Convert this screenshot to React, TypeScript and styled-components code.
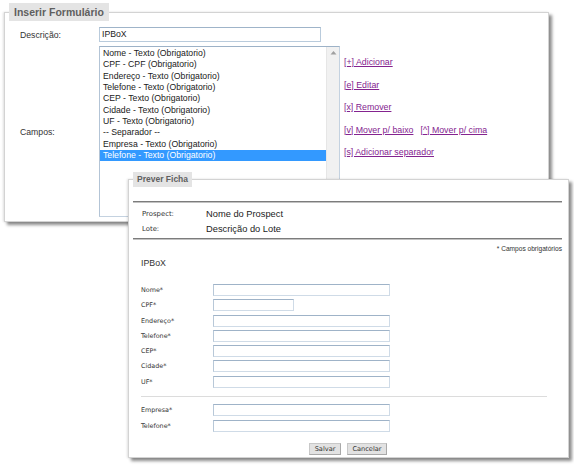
import styled, { createGlobalStyle } from 'styled-components';

const GlobalStyle = createGlobalStyle`
  html, body {
    margin: 0;
    padding: 0;
    background: #fff;
  }
  body {
    font-family: "Liberation Sans", Arial, sans-serif;
    color: #222;
  }
`;

const campos = [
  'Nome - Texto (Obrigatorio)',
  'CPF - CPF (Obrigatorio)',
  'Endereço - Texto (Obrigatorio)',
  'Telefone - Texto (Obrigatorio)',
  'CEP - Texto (Obrigatorio)',
  'Cidade - Texto (Obrigatorio)',
  'UF - Texto (Obrigatorio)',
  '-- Separador --',
  'Empresa - Texto (Obrigatorio)',
  'Telefone - Texto (Obrigatorio)',
];

const fichaTop = [
  { label: 'Nome*', short: false },
  { label: 'CPF*', short: true },
  { label: 'Endereço*', short: false },
  { label: 'Telefone*', short: false },
  { label: 'CEP*', short: false },
  { label: 'Cidade*', short: false },
  { label: 'UF*', short: false },
];

const fichaBottom = ['Empresa*', 'Telefone*'];

export default function App() {
  return (
    <>
      <GlobalStyle />
      <Desktop>
        <Window $left={4} $top={3} $width={545} $height={219}>
          <Legend $size={10.5} $height={18} $pad={5}>
            Inserir Formulário
          </Legend>
          <FormBody>
            <FieldLabel>Descrição:</FieldLabel>
            <TextBox>IPBoX</TextBox>
            <span />
            <FieldLabel>Campos:</FieldLabel>
            <ListBox>
              <ListItems>
                {campos.map((c, i) => (
                  <ListItem key={i} $selected={i === campos.length - 1}>
                    {c}
                  </ListItem>
                ))}
              </ListItems>
              <ScrollBar>
                <svg width="7" height="5" viewBox="0 0 7 5">
                  <path d="M0.5 4.5 L3.5 1 L6.5 4.5 Z" fill="#a0a0a0" />
                </svg>
              </ScrollBar>
            </ListBox>
            <Actions>
              <ActionRow>
                <ActionLink href="#">[+] Adicionar</ActionLink>
              </ActionRow>
              <ActionRow>
                <ActionLink href="#">[e] Editar</ActionLink>
              </ActionRow>
              <ActionRow>
                <ActionLink href="#">[x] Remover</ActionLink>
              </ActionRow>
              <ActionRow>
                <ActionLink href="#">[v] Mover p/ baixo</ActionLink>
                <ActionLink href="#">[^] Mover p/ cima</ActionLink>
              </ActionRow>
              <ActionRow>
                <ActionLink href="#">[s] Adicionar separador</ActionLink>
              </ActionRow>
            </Actions>
          </FormBody>
        </Window>

        <Window $left={128} $top={172} $width={441} $height={286}>
          <Legend $size={8.5} $height={15} $pad={4}>
            Prever Ficha
          </Legend>
          <FichaBody>
            <Rule />
            <InfoTable>
              <InfoLabel>Prospect:</InfoLabel>
              <InfoValue>Nome do Prospect</InfoValue>
              <InfoLabel>Lote:</InfoLabel>
              <InfoValue>Descrição do Lote</InfoValue>
            </InfoTable>
            <Rule />
            <RequiredNote>* Campos obrigatórios</RequiredNote>
            <FichaTitle>IPBoX</FichaTitle>
            <FichaGrid>
              {fichaTop.map((f) => (
                <FichaRow key={f.label}>
                  <FichaLabel>{f.label}</FichaLabel>
                  <FichaInput $short={f.short} />
                </FichaRow>
              ))}
              <FichaSeparator />
              {fichaBottom.map((f) => (
                <FichaRow key={f}>
                  <FichaLabel>{f}</FichaLabel>
                  <FichaInput $short={false} />
                </FichaRow>
              ))}
            </FichaGrid>
            <ButtonBar>
              <Button>Salvar</Button>
              <Button>Cancelar</Button>
            </ButtonBar>
          </FichaBody>
        </Window>
      </Desktop>
    </>
  );
}

const Desktop = styled.div`
  position: relative;
  width: 574px;
  height: 465px;
  overflow: hidden;
  background: #fff;
`;

interface WindowProps {
  $left: number;
  $top: number;
  $width: number;
  $height: number;
}

const Window = styled.fieldset<WindowProps>`
  position: absolute;
  left: ${({ $left }) => $left}px;
  top: ${({ $top }) => $top}px;
  width: ${({ $width }) => $width}px;
  height: ${({ $height }) => $height}px;
  box-sizing: border-box;
  margin: 0;
  padding: 0;
  min-width: 0;
  border: 1px solid #d3d3d3;
  background: #fff;
  box-shadow: 3px 3px 3px rgba(0, 0, 0, 0.45), -1px 0 2px rgba(0, 0, 0, 0.12);
`;

const Legend = styled.legend<{ $size: number; $height: number; $pad: number }>`
  margin-left: 4px;
  padding: 0 ${({ $pad }) => $pad}px;
  box-sizing: border-box;
  height: ${({ $height }) => $height}px;
  line-height: ${({ $height }) => $height}px;
  background: #e4e4e4;
  color: #5f5f5f;
  font-weight: bold;
  font-size: ${({ $size }) => $size}px;
`;

const FormBody = styled.div`
  display: grid;
  grid-template-columns: 79px auto 1fr;
  row-gap: 4px;
  padding: 6px 0 0 15px;
  font-size: 8.7px;
`;

const FieldLabel = styled.div`
  align-self: center;
  color: #333;
`;

const TextBox = styled.div`
  box-sizing: border-box;
  width: 222px;
  height: 15px;
  line-height: 13px;
  padding-left: 2px;
  border: 1px solid #b9cbdc;
  border-top-color: #9fb4c9;
  color: #222;
`;

const ListBox = styled.div`
  display: flex;
  box-sizing: border-box;
  width: 241px;
  height: 171px;
  border: 1px solid #c4d2e0;
  border-top-color: #9db2c7;
  border-left-color: #b3c4d6;
`;

const ListItems = styled.div`
  flex: 1;
  padding-top: 1px;
`;

const ListItem = styled.div<{ $selected: boolean }>`
  height: 11.33px;
  line-height: 11.33px;
  padding-left: 3px;
  white-space: nowrap;
  color: ${({ $selected }) => ($selected ? '#fff' : '#1a1a1a')};
  background: ${({ $selected }) => ($selected ? '#3399ff' : 'transparent')};
`;

const ScrollBar = styled.div`
  display: flex;
  justify-content: center;
  width: 13px;
  padding-top: 3px;
  background: #f1f1f1;
  border-left: 1px solid #e6e6e6;
  box-sizing: border-box;
`;

const Actions = styled.div`
  display: flex;
  flex-direction: column;
  gap: 11.5px;
  padding: 11px 0 0 4px;
`;

const ActionRow = styled.div`
  display: flex;
  gap: 7px;
  height: 11px;
  line-height: 11px;
`;

const ActionLink = styled.a`
  font-size: 8.8px;
  color: #84238f;
  text-decoration: underline;
  white-space: nowrap;
`;

const FichaBody = styled.div`
  padding: 14px 6px 0 4px;
`;

const Rule = styled.div`
  border-top: 1px solid #7c7c7c;
  border-bottom: 1px solid #c2c2c2;
`;

const InfoTable = styled.div`
  display: grid;
  grid-template-columns: 64px 1fr;
  grid-auto-rows: 15px;
  align-items: center;
  padding: 3px 0 2px 9px;
`;

const InfoLabel = styled.div`
  font-family: "DejaVu Sans", Verdana, sans-serif;
  font-size: 6.9px;
  color: #333;
`;

const InfoValue = styled.div`
  font-size: 9.3px;
  color: #222;
`;

const RequiredNote = styled.div`
  margin-top: 5px;
  text-align: right;
  font-size: 6.6px;
  line-height: 8px;
  color: #333;
`;

const FichaTitle = styled.div`
  margin-top: 5px;
  padding-left: 8px;
  font-size: 8.8px;
  line-height: 11px;
  color: #333;
`;

const FichaGrid = styled.div`
  display: flex;
  flex-direction: column;
  gap: 3.3px;
  margin-top: 15px;
  padding-left: 8px;
`;

const FichaRow = styled.div`
  display: grid;
  grid-template-columns: 72px 1fr;
  align-items: center;
  height: 12px;
`;

const FichaLabel = styled.div`
  font-family: "DejaVu Sans", Verdana, sans-serif;
  font-size: 6.4px;
  color: #333;
`;

const FichaInput = styled.div<{ $short: boolean }>`
  box-sizing: border-box;
  width: ${({ $short }) => ($short ? 81 : 177)}px;
  height: 12px;
  background: #fff;
  border: 1px solid #cfdbe7;
  border-top-color: #9fb3c8;
  border-left-color: #b8c8d8;
`;

const FichaSeparator = styled.div`
  height: 0;
  margin: 4.5px 15px 4.5px 0;
  border-top: 1px solid #dcdcdc;
`;

const ButtonBar = styled.div`
  display: flex;
  justify-content: flex-end;
  gap: 6px;
  width: 246px;
  margin: 11.5px 0 0 8px;
`;

const Button = styled.button`
  box-sizing: border-box;
  height: 12px;
  margin: 0;
  padding: 0 4.5px;
  font-family: "DejaVu Sans", Verdana, sans-serif;
  font-size: 6.6px;
  line-height: 10px;
  color: #333;
  background: #e2e2e2;
  border: 1px solid #c8c8c8;
  border-right-color: #a9a9a9;
  border-bottom-color: #a9a9a9;
`;
